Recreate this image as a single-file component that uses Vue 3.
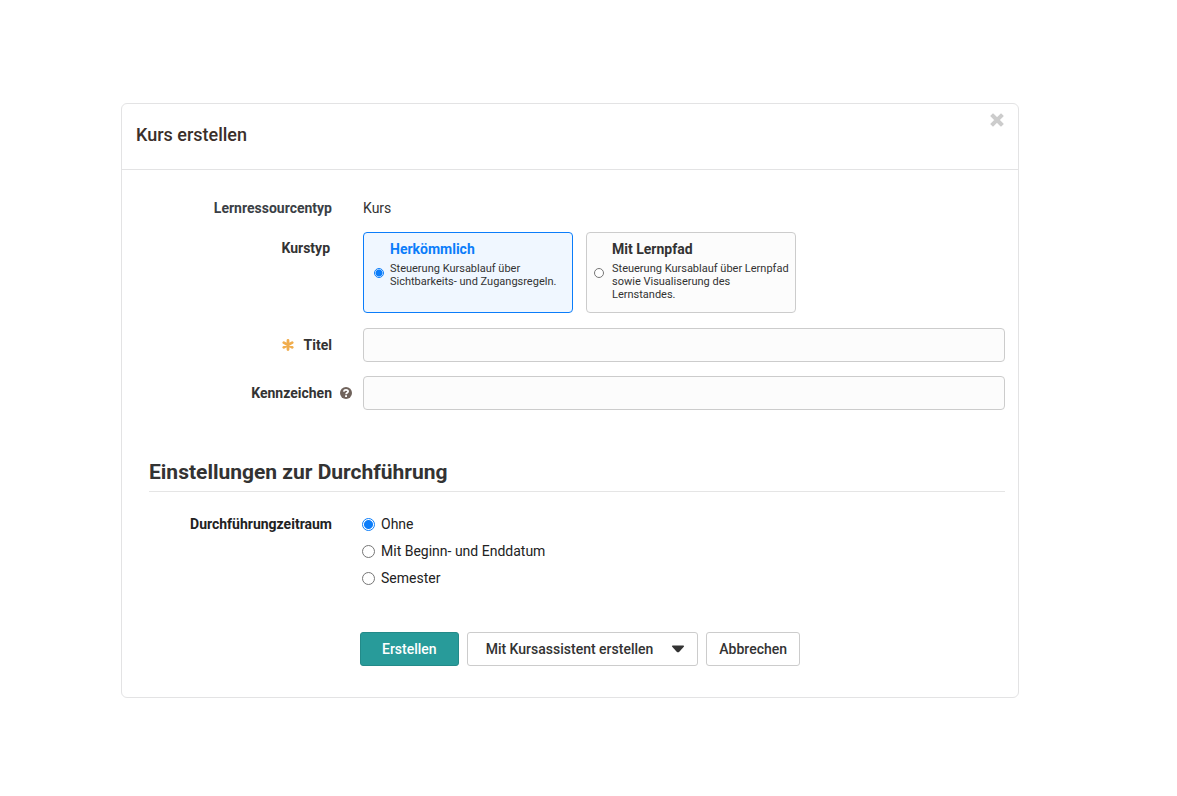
<script setup>
import { ref } from 'vue'

const courseType = ref('classic')
const title = ref('')
const reference = ref('')
const period = ref('none')

const courseTypes = [
  { value: 'classic', label: 'Herkömmlich', text: 'Steuerung Kursablauf über Sichtbarkeits- und Zugangsregeln.' },
  { value: 'path', label: 'Mit Lernpfad', text: 'Steuerung Kursablauf über Lernpfad sowie Visualiserung des Lernstandes.' },
]
const periods = [
  { value: 'none', label: 'Ohne' },
  { value: 'dates', label: 'Mit Beginn- und Enddatum' },
  { value: 'semester', label: 'Semester' },
]
</script>

<template>
  <main class="dialog" role="dialog" aria-labelledby="dialog-title">
    <header class="head">
      <h1 id="dialog-title">Kurs erstellen</h1>
      <button class="close" type="button" aria-label="Schliessen">
        <svg viewBox="0 0 14 14" width="14" height="14" aria-hidden="true">
          <path d="M3 3 11 11M11 3 3 11" fill="none" stroke="currentColor" stroke-width="4" stroke-linecap="square" stroke-linejoin="round" />
        </svg>
      </button>
    </header>

    <form class="body" @submit.prevent>
      <div class="row">
        <div class="name slate">Lernressourcentyp</div>
        <div class="static">Kurs</div>
      </div>

      <div class="row types" role="radiogroup" aria-labelledby="type-name">
        <div id="type-name" class="name type-name">Kurstyp</div>
        <div class="cards">
          <label v-for="t in courseTypes" :key="t.value" class="card" :class="[t.value, { active: courseType === t.value }]">
            <input v-model="courseType" type="radio" name="type" :value="t.value" class="radio small" />
            <span class="card-text">
              <strong>{{ t.label }}</strong>
              <span class="desc">{{ t.text }}</span>
            </span>
          </label>
        </div>
      </div>

      <div class="row field">
        <label class="name" for="title">
          <svg class="required" viewBox="0 0 12 12" width="12" height="12" aria-hidden="true">
            <path d="M6 1.4V10.6M1.8 3.6 10.2 8.4M10.2 3.6 1.8 8.4" fill="none" stroke="currentColor" stroke-width="2.8" stroke-linecap="round" />
          </svg>
          Titel
        </label>
        <input id="title" v-model="title" type="text" class="text" />
      </div>

      <div class="row field">
        <label class="name with-help" for="reference">
          Kennzeichen
          <svg class="help" viewBox="0 0 12 12" width="12" height="12" aria-hidden="true">
            <circle cx="6" cy="6" r="6" fill="currentColor" />
            <path d="M3.7 4.6C4 3.3 4.9 2.9 6 2.9s2.1.6 2.1 1.6C8.1 5.8 6.1 5.8 6.1 7.3" fill="none" stroke="#fff" stroke-width="1.8" />
            <rect x="5.1" y="8.2" width="1.9" height="1.8" fill="#fff" />
          </svg>
        </label>
        <input id="reference" v-model="reference" type="text" class="text" />
      </div>

      <h2>Einstellungen zur Durchführung</h2>

      <div class="row period" role="radiogroup" aria-labelledby="period-name">
        <div id="period-name" class="name">Durchführungzeitraum</div>
        <div class="options">
          <label v-for="p in periods" :key="p.value" class="option">
            <input v-model="period" type="radio" name="period" :value="p.value" class="radio" />
            {{ p.label }}
          </label>
        </div>
      </div>

      <div class="actions">
        <button type="submit" class="btn primary">Erstellen</button>
        <button type="button" class="btn assistant">
          Mit Kursassistent erstellen
          <svg viewBox="0 0 14 8" width="14" height="8" aria-hidden="true">
            <path d="M1.6.4H12.4Q13.6.7 12.8 1.7L8.3 6.7Q7 8 5.7 6.7L1.2 1.7Q.4.7 1.6.4Z" fill="currentColor" />
          </svg>
        </button>
        <button type="button" class="btn">Abbrechen</button>
      </div>
    </form>
  </main>
</template>

<style>
body {
  margin: 0;
  background: #fff;
}
</style>

<style scoped>
* {
  box-sizing: border-box;
}
.dialog {
  margin: 103px 158px 40px 121px;
  border: 1px solid #e3e3e4;
  border-radius: 6px;
  background: #fff;
  color: #333;
  font: 14px/20px Roboto, "Liberation Sans", sans-serif;
}
.head {
  display: flex;
  justify-content: space-between;
  align-items: flex-start;
  padding: 9px 14px 22px;
  border-bottom: 1px solid #e3e3e4;
}
h1 {
  margin: 10px 0 0;
  color: #3a2f2a;
  font-size: 18px;
  line-height: 24px;
  font-weight: 500;
}
.close {
  display: flex;
  padding: 0;
  border: 0;
  background: none;
  color: #ccc;
}
.body {
  padding: 28px 13px 31px 27px;
}
.row {
  display: grid;
  grid-template-columns: 214px 1fr;
  margin-bottom: 14px;
}
.row.types {
  margin-bottom: 15px;
}
.name {
  display: flex;
  justify-content: flex-end;
  padding-right: 31px;
  font-weight: 700;
}
.slate {
  color: #3b3f46;
}
.type-name {
  padding-top: 6px;
  padding-right: 33px;
}
.field .name {
  align-items: center;
}
.required {
  margin-right: 10px;
  color: #f0ad4e;
}
.name.with-help {
  padding-right: 11px;
}
.help {
  margin-left: 8px;
  color: #70635c;
}
.cards {
  display: flex;
  gap: 13px;
}
.card {
  display: flex;
  align-items: center;
  width: 210px;
  height: 81px;
  padding: 0 4px 0 10px;
  gap: 6px;
  border: 1px solid #ccc;
  border-radius: 4px;
  background: #fcfcfc;
}
.card.path {
  padding-left: 7px;
  gap: 8px;
}
.card.active {
  border-color: #0b7dfa;
  background: #f0f7ff;
}
.card.active strong {
  color: #0b7dfa;
}
.card-text {
  align-self: flex-start;
  padding-top: 6px;
}
strong {
  display: block;
}
.desc {
  display: block;
  margin-top: 3px;
  font-size: 11px;
  line-height: 13px;
}
.radio {
  flex: none;
  appearance: none;
  width: 13px;
  height: 13px;
  margin: 0;
  border: 1px solid #767676;
  border-radius: 50%;
  background: #fff;
}
.radio.small {
  width: 10px;
  height: 10px;
}
.radio:checked {
  border-color: #0b7dfa;
  background: radial-gradient(circle, #0b7dfa 0 4px, #fff 5px);
}
.radio.small:checked {
  background: radial-gradient(circle, #0b7dfa 0 3px, #fff 4px);
}
.text {
  width: 100%;
  height: 34px;
  padding: 6px 12px;
  border: 1px solid #ccc;
  border-radius: 4px;
  background: #fcfcfc;
  color: inherit;
  font: inherit;
}
h2 {
  margin: 47px 0 22px;
  padding-bottom: 4px;
  border-bottom: 1px solid #e5e5e5;
  font-size: 21px;
  line-height: 30px;
  font-weight: 700;
}
.period {
  color: #222;
}
.options {
  display: grid;
  gap: 7px;
  margin-left: -1px;
}
.option {
  display: flex;
  align-items: center;
  gap: 6px;
}
.actions {
  display: flex;
  gap: 8px;
  margin: 44px 0 0 211px;
}
.btn {
  display: flex;
  align-items: center;
  height: 34px;
  padding: 0 12px;
  border: 1px solid #ccc;
  border-radius: 3px;
  background: #fff;
  color: #333;
  font: 500 14px/20px Roboto, "Liberation Sans", sans-serif;
}
.primary {
  padding: 0 21px;
  border-color: #238a89;
  background: #289b9a;
  color: #fff;
}
.assistant {
  gap: 18px;
  padding: 0 12px 0 18px;
}
</style>
